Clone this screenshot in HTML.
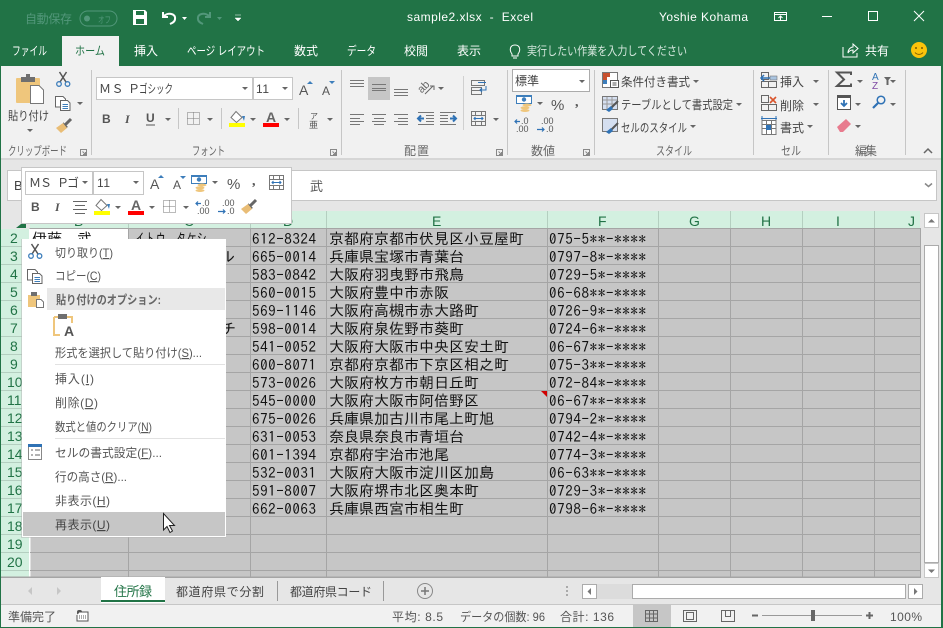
<!DOCTYPE html>
<html lang="ja"><head><meta charset="utf-8"><title>sample2.xlsx - Excel</title>
<style>
html,body{margin:0;padding:0;width:943px;height:628px;overflow:hidden;background:#e6e6e6}
svg{display:block;position:absolute;left:0;top:0}
text{font-family:"Liberation Sans","Noto Sans CJK JP",sans-serif;font-size:12px;fill:#444;white-space:pre}
.w text,text.w{fill:#fff}
.g text{fill:#666}
.c text{font-family:"IPAGothic","Liberation Sans",sans-serif;font-size:15px;fill:#111}
.h text{font-family:"Liberation Sans",sans-serif;font-size:14px;fill:#217346}
.m text{fill:#555}
tspan.u{text-decoration:underline}
</style></head><body>
<svg width="943" height="628" viewBox="0 0 943 628" xmlns="http://www.w3.org/2000/svg">
<defs>
<path id="ar" d="M0 0H6L3 3Z" fill="#666"/>
<g id="sc" fill="none"><path d="M4 10L10.500 0M10 10L3.500 0" stroke="#555" stroke-width="1.500"/><circle cx="3" cy="12" r="2.300" stroke="#3d7ebb" stroke-width="1.300"/><circle cx="11.500" cy="12" r="2.300" stroke="#3d7ebb" stroke-width="1.300"/></g>
<g id="br"><path d="M16 0L10 6" stroke="#666" stroke-width="3"/><path d="M8 3L13 8L11 9L9 8Z" fill="#666"/><path d="M1 9L8 4L12 9L6 14Z" fill="#e9bd76"/></g>
<g id="cp" fill="#fff" stroke="#666"><path d="M.5.5H8L10.500 3V11H.5Z"/><path d="M5.500 4.500H12.500L15 7V14.500H5.500Z"/><path d="M7.500 8.500H13M7.500 10.500H13M7.500 12.500H13" stroke="#3d7ebb"/></g>
<g id="fl"><path d="M7 0.500L13 6.500L7.500 11.500L2 6.500Z" fill="#fff" stroke="#777"/><path d="M13 5H16L15 10Z" fill="#3d7ebb"/></g>
<g id="bd" fill="none" stroke="#777" stroke-dasharray="1 1"><rect x=".5" y=".5" width="12" height="12"/><path d="M.5 6.500H12.500M6.500 .5V12.500"/></g>
<g id="ac"><rect x=".5" y=".5" width="15" height="8" fill="#fff" stroke="#3d7ebb"/><rect x="0" y="0" width="16" height="2" fill="#3d7ebb"/><circle cx="8" cy="4.500" r="2.200" fill="#3d7ebb"/><ellipse cx="11" cy="10" rx="4.500" ry="1.500" fill="#efc67c"/><ellipse cx="9" cy="12.800" rx="4.500" ry="1.500" fill="#efc67c"/><ellipse cx="9" cy="15.500" rx="4.500" ry="1.500" fill="#efc67c"/></g>
<g id="dl"><text x="6" y="6" style="font-size:9px;fill:#555">.0</text><text x="1" y="14" style="font-size:9px;fill:#555">.00</text><path d="M5 3.500H0M2 1.500L0 3.500L2 5.500" fill="none" stroke="#2f72b5" stroke-width="1.200"/></g>
<g id="dr"><text x="4" y="6" style="font-size:9px;fill:#555">.00</text><text x="9" y="14" style="font-size:9px;fill:#555">.0</text><path d="M0 11.500H7M5 9.500L7 11.500L5 13.500" fill="none" stroke="#2f72b5" stroke-width="1.200"/></g>
<g id="mg" fill="none" stroke="#777"><rect x=".5" y=".5" width="14" height="14"/><path d="M.5 4.500H14.500M.5 10.500H14.500M4.500 .5V4.500M10.500 .5V4.500M4.500 10.500V14.500M10.500 10.500V14.500"/><path d="M3 7.500H12M4.500 6L3 7.500L4.500 9M10.500 6L12 7.500L10.500 9" stroke="#2f72b5"/></g>
<path id="lc" d="M.5.5H6.500V6.500H.5Z M2.500 2.500L5.500 5.500M5.500 3V5.500H3" fill="none" stroke="#888"/>
<g id="tb" fill="#fff" stroke="#777"><rect x=".5" y=".5" width="14" height="14"/><path d="M.5 4.500H14.500M.5 8.500H14.500M5 .5V14.500M10 .5V14.500" fill="none"/></g>
</defs>

<!-- base -->
<rect width="943" height="628" fill="#e6e6e6"/>
<rect width="943" height="66" fill="#217346"/>

<!-- title bar -->
<text x="25" y="23" textLength="47" style="fill:#52977a;font-size:12px">自動保存</text>
<rect x="80" y="11" width="37" height="15" rx="7.500" fill="none" stroke="#52977a"/>
<circle cx="87" cy="18.500" r="3" fill="#52977a"/>
<text x="98" y="23" textLength="13" lengthAdjust="spacingAndGlyphs" style="fill:#52977a;font-size:9px">オフ</text>
<path d="M133 10H145L147 12V25H133Z" fill="#fff"/><rect x="136" y="11" width="8" height="4" fill="#217346"/><rect x="136" y="19" width="8" height="5" fill="#217346"/>
<path d="M163 12V17H168M163 17C167 12 176 13 175 19C175 22 172 23 170 24" fill="none" stroke="#fff" stroke-width="2"/>
<path d="M182 17H187L184.500 20Z" fill="#fff"/>
<path d="M210 12V17H205M210 17C206 12 197 13 198 19C198 22 201 23 203 24" fill="none" stroke="#52977a" stroke-width="2"/>
<path d="M217 17H222L219.500 20Z" fill="#52977a"/>
<path d="M235 15H241M235 18H241L238 21Z" fill="#fff" stroke="#fff" stroke-width=".5"/>
<g class="w">
<text x="407" y="21" textLength="126">sample2.xlsx  -  Excel</text>
<text x="659" y="21" textLength="89">Yoshie Kohama</text>
</g>
<g fill="none" stroke="#fff"><rect x="774.500" y="12.500" width="12" height="8"/><path d="M774 14.500H787M780.500 20V16M778.500 18L780.500 16L782.500 18"/>
<path d="M822 16.500H832"/><rect x="868.500" y="11.500" width="9" height="9"/><path d="M914 11L924 21M924 11L914 21"/></g>

<!-- tabs -->
<rect x="62" y="36" width="57" height="30" fill="#f1f1f1"/>
<g class="w">
<text x="12" y="55" textLength="35" lengthAdjust="spacingAndGlyphs">ファイル</text>
<text x="134" y="55" textLength="24">挿入</text>
<text x="187" y="55" textLength="78" lengthAdjust="spacingAndGlyphs">ページ レイアウト</text>
<text x="294" y="55" textLength="24">数式</text>
<text x="347" y="55" textLength="29" lengthAdjust="spacingAndGlyphs">データ</text>
<text x="404" y="55" textLength="24">校閲</text>
<text x="457" y="55" textLength="24">表示</text>
<text x="527" y="55" textLength="160" lengthAdjust="spacingAndGlyphs" style="fill:#d7e8df">実行したい作業を入力してください</text>
<text x="865" y="55" textLength="24">共有</text>
</g>
<text x="75" y="55" textLength="30" lengthAdjust="spacingAndGlyphs" style="fill:#217346">ホーム</text>
<path d="M512 54C509 50 510 45 515 45C520 45 521 50 518 54V56H512ZM513 58H517" fill="none" stroke="#fff"/>
<path d="M843 47V57H857V53M848 53C848 49 851 47 853 47V44L858 48.500L853 53V50C851 50 849 51 848 53Z" fill="none" stroke="#fff"/>
<circle cx="919" cy="50" r="8" fill="#fcc30b"/><circle cx="916" cy="48" r="1" fill="#7a5a00"/><circle cx="922" cy="48" r="1" fill="#7a5a00"/><path d="M915 52.500C917 55 921 55 923 52.500" fill="none" stroke="#7a5a00"/>

<!-- ribbon -->
<rect x="1" y="66" width="941" height="92" fill="#f1f1f1"/>
<rect x="1" y="158" width="941" height="2" fill="#d6d6d6"/>
<path d="M91.500 70V155M341.500 70V155M507.500 70V155M594.500 70V155M753.500 70V155M828.500 70V155M905.500 70V155" stroke="#c6c6c6"/>

<!-- clipboard -->
<rect x="16" y="78" width="24" height="25" rx="1" fill="#efc67c"/><rect x="21" y="77" width="14" height="5" fill="#6f6f6f"/><rect x="26" y="74" width="4" height="4" fill="#6f6f6f"/>
<path d="M30.500 85.500H39L43.500 90V103.500H30.500Z" fill="#fff" stroke="#777"/>
<text x="8" y="120" textLength="41" lengthAdjust="spacingAndGlyphs">貼り付け</text>
<use href="#ar" x="27" y="129"/>
<use href="#sc" x="56" y="72"/>
<use href="#cp" x="55" y="96"/>
<use href="#ar" x="77" y="102"/>
<use href="#br" x="55" y="119"/>
<g class="g"><text x="8" y="155" textLength="59" lengthAdjust="spacingAndGlyphs">クリップボード</text></g>
<use href="#lc" x="80" y="149"/>

<!-- font -->
<rect x="96.500" y="77.500" width="156" height="22" fill="#fff" stroke="#c6c6c6"/>
<rect x="253.500" y="77.500" width="39" height="22" fill="#fff" stroke="#c6c6c6"/>
<text x="99 111.500 128 128" y="93">ＭＳ Ｐ</text>
<text x="139" y="93" textLength="34" lengthAdjust="spacingAndGlyphs">ゴシック</text>
<text x="256" y="93" textLength="13">11</text>
<use href="#ar" x="242" y="87"/><use href="#ar" x="282" y="87"/>
<text x="299" y="95" style="font-size:14px;fill:#555">A</text><path d="M307 84L310 81L313 84Z" fill="#3d7ebb"/>
<text x="322" y="95" style="font-size:12px;fill:#555">A</text><path d="M329 81H335L332 84Z" fill="#3d7ebb"/>
<text x="102" y="123" style="font-size:12px;font-weight:bold;fill:#555">B</text>
<text x="125" y="123" style="font-size:12px;font-style:italic;font-family:'Liberation Serif';font-weight:bold;fill:#555">I</text>
<text x="146" y="122" style="font-size:12px;font-weight:bold;fill:#555">U</text><path d="M146 125H155" stroke="#555"/>
<use href="#ar" x="165" y="118"/>
<path d="M178.500 108V129M221.500 108V129M298.500 108V129" stroke="#c6c6c6"/>
<use href="#bd" x="187" y="112"/><use href="#ar" x="207" y="118"/>
<use href="#fl" x="229" y="111"/><rect x="229" y="123" width="16" height="4" fill="#ff0"/><use href="#ar" x="250" y="118"/>
<text x="266" y="122" style="font-size:14px;font-weight:bold;fill:#666">A</text><rect x="263" y="123" width="16" height="4" fill="#f00"/><use href="#ar" x="284" y="118"/>
<text x="310" y="119" style="font-size:8px;fill:#555">ア</text><text x="309" y="128" style="font-size:9px;fill:#555">亜</text><use href="#ar" x="327" y="118"/>
<g class="g"><text x="192" y="155" textLength="33" lengthAdjust="spacingAndGlyphs">フォント</text></g>
<use href="#lc" x="330" y="149"/>

<!-- alignment -->
<rect x="368" y="77" width="22" height="23" fill="#c6c6c6"/>
<path d="M350 80.500H364M350 83.500H364M350 86.500H364M372 84.500H386M372 88.500H386M372 90.500H386M394 89.500H408M394 92.500H408M394 95.500H408" stroke="#777"/>
<path d="M350 114.500H364M350 118.500H360M350 121.500H364M350 124.500H360M372 114.500H386M374 118.500H384M372 121.500H386M374 124.500H384M394 114.500H408M398 118.500H408M394 121.500H408M398 124.500H408" stroke="#777"/>
<path d="M418 112.500H434M426 115.500H434M426 118.500H434M426 121.500H434M418 124.500H434M440 112.500H456M440 115.500H448M440 118.500H448M440 121.500H448M440 124.500H456" stroke="#777"/>
<path d="M424 118.500H418M421 115.500L418 118.500L421 121.500" fill="none" stroke="#2f72b5" stroke-width="2"/><path d="M450 118.500H456M453 115.500L456 118.500L453 121.500" fill="none" stroke="#2f72b5" stroke-width="2"/>
<path d="M425 94L433 86M430 86H434V90" fill="none" stroke="#666"/><text x="418" y="91" style="font-size:11px;fill:#666" transform="rotate(-45 423 88)">ab</text>
<use href="#ar" x="438" y="87"/>
<path d="M463.500 76V130" stroke="#d0d0d0"/>
<g fill="none" stroke="#777"><rect x="471.500" y="80.500" width="13" height="5"/><rect x="471.500" y="87.500" width="10" height="7"/><path d="M471.500 90.500H481"/></g><path d="M478 82.500H486M486 86V90H480M482 88L480 90L482 92" fill="none" stroke="#2f72b5"/>
<use href="#mg" x="471" y="111"/><use href="#ar" x="493" y="118"/>
<g class="g"><text x="404" y="155" textLength="25">配置</text></g>
<use href="#lc" x="496" y="149"/>

<!-- number -->
<rect x="512.500" y="69.500" width="77" height="22" fill="#fff" stroke="#ababab"/>
<text x="515" y="85" textLength="24">標準</text>
<use href="#ar" x="579" y="80"/>
<use href="#ac" x="516" y="95"/><use href="#ar" x="537" y="102"/>
<text x="551" y="110" style="font-size:15px;fill:#555">%</text>
<text x="575" y="106" style="font-size:14px;font-weight:bold;font-family:'Liberation Serif';fill:#555">,</text>
<use href="#dl" x="515" y="118"/><use href="#dr" x="537" y="118"/>
<g class="g"><text x="531" y="155" textLength="24">数値</text></g>
<use href="#lc" x="583" y="149"/>

<!-- styles -->
<rect x="602.500" y="72.500" width="15" height="15" fill="#fff" stroke="#777"/><path d="M603 73H610V77H603ZM603 77H607V80H603Z" fill="#c8502e"/><path d="M603 80H607V84H603Z" fill="#3d7ebb"/><rect x="610.500" y="80.500" width="8" height="7" fill="#fff" stroke="#555"/><path d="M612.500 83H616.500M612.500 85H616.500" stroke="#555"/>
<rect x="602.500" y="96.500" width="15" height="13" fill="#d5dff0" stroke="#777"/><path d="M603 100H617M603 104H617M607 97V110M612 97V110" stroke="#999"/><path d="M611 108L618 101" stroke="#555" stroke-width="2"/><path d="M606 110L611 106L613 109L609 112Z" fill="#2f72b5"/>
<rect x="602.500" y="118.500" width="15" height="13" fill="#d5dff0" stroke="#777"/><path d="M611 130L618 123" stroke="#555" stroke-width="2"/><path d="M606 132L611 128L613 131L609 134Z" fill="#2f72b5"/>
<text x="621" y="86" textLength="69" lengthAdjust="spacingAndGlyphs">条件付き書式</text><use href="#ar" x="693" y="80"/>
<text x="621" y="109" textLength="112" lengthAdjust="spacingAndGlyphs">テーブルとして書式設定</text><use href="#ar" x="736" y="103"/>
<text x="621" y="132" textLength="66" lengthAdjust="spacingAndGlyphs">セルのスタイル</text><use href="#ar" x="690" y="125"/>
<g class="g"><text x="656" y="155" textLength="36" lengthAdjust="spacingAndGlyphs">スタイル</text></g>

<!-- cells -->
<g fill="none" stroke="#666"><path d="M761.500 72.500H768.500V79.500H761.500ZM761.500 81.500H776.500V87.500H761.500ZM768.500 81.500V87.500"/></g>
<rect x="770" y="76" width="7" height="4" fill="#a9c4e0" stroke="#777" stroke-width=".6"/><path d="M770 78H761M764 75L761 78L764 81" fill="none" stroke="#2f72b5" stroke-width="1.500"/>
<text x="780" y="86" textLength="24">挿入</text><use href="#ar" x="813" y="80"/>
<g fill="none" stroke="#666"><path d="M761.500 95.500H768.500V102.500H761.500ZM761.500 104.500H776.500V110.500H761.500ZM768.500 104.500V110.500"/></g>
<path d="M770 97L776 103M776 97L770 103" stroke="#d9552c" stroke-width="1.600"/>
<text x="780" y="110" textLength="24">削除</text><use href="#ar" x="813" y="103"/>
<path d="M761 118.500H777M762 116V121M776 116V121" stroke="#2f72b5"/><use href="#tb" x="761.500" y="120"/><rect x="766" y="125" width="5" height="5" fill="#2f72b5"/>
<text x="780" y="132" textLength="24">書式</text><use href="#ar" x="807" y="125"/>
<g class="g"><text x="781" y="155" textLength="20" lengthAdjust="spacingAndGlyphs">セル</text></g>

<!-- edit -->
<path d="M851 75V72.500H837L844 79.500L837 86H851V83.500" fill="none" stroke="#555" stroke-width="2"/><use href="#ar" x="857" y="80"/>
<text x="872" y="80" style="font-size:10px;fill:#2f72b5">A</text><text x="872" y="89" style="font-size:10px;fill:#7f4aa3">Z</text>
<path d="M884 77H891L888.500 80V85H886.500V80Z" fill="#666"/><use href="#ar" x="890" y="80"/>
<rect x="837.500" y="95.500" width="13" height="14" fill="#fff" stroke="#555"/><rect x="838" y="96" width="12" height="2" fill="#555"/><path d="M844 100V106M841 103L844 106L847 103" fill="none" stroke="#2f72b5" stroke-width="1.800"/><use href="#ar" x="855" y="103"/>
<circle cx="881" cy="100" r="3.800" fill="none" stroke="#2f72b5" stroke-width="1.500"/><path d="M878 103L873 108" stroke="#2f72b5" stroke-width="2.200"/><use href="#ar" x="890" y="103"/>
<path d="M837 127L846 119L851 124L843 132H840Z" fill="#e87b8e"/><use href="#ar" x="855" y="125"/>
<g class="g"><text x="855" y="155" textLength="22">編集</text></g>
<path d="M924 153L928 149L932 153" fill="none" stroke="#666" stroke-width="1.500"/>

<!-- formula bar -->
<rect x="7.500" y="170.500" width="929" height="30" fill="#fff" stroke="#c6c6c6"/>
<text x="14" y="190" style="font-size:13px">B</text>
<text x="310" y="191" style="font-size:13px;fill:#555">武</text>
<path d="M925 183.500L928.500 186.500L932 183.500" fill="none" stroke="#888" stroke-width="1.500"/>

<!-- headers -->
<rect x="1" y="211" width="29" height="18" fill="#e6e6e6"/>
<path d="M16 228L26 228L26 220Z" fill="#217346"/>
<rect x="30" y="211" width="890" height="18" fill="#d3f0e0"/>
<path d="M128.500 211V228M250.500 211V228M326.500 211V228M547.500 211V228M658.500 211V228M730.500 211V228M802.500 211V228M874.500 211V228" stroke="#b4cfc0"/>
<rect x="1" y="229" width="29" height="348" fill="#d3f0e0"/>
<path d="M1 246.500H29M1 264.500H29M1 282.500H29M1 300.500H29M1 318.500H29M1 336.500H29M1 354.500H29M1 372.500H29M1 390.500H29M1 408.500H29M1 426.500H29M1 444.500H29M1 462.500H29M1 480.500H29M1 498.500H29M1 516.500H29M1 534.500H29M1 552.500H29M1 570.500H29" stroke="#b4cfc0"/>
<g class="h">
<text x="74" y="226">B</text><text x="184" y="226">C</text><text x="283" y="226">D</text><text x="432" y="226">E</text><text x="598" y="226">F</text><text x="689" y="226">G</text><text x="761" y="226">H</text><text x="836" y="226">I</text><text x="908" y="226">J</text>
<text x="10" y="243">2</text><text x="10" y="261">3</text><text x="10" y="279">4</text><text x="10" y="297">5</text><text x="10" y="315">6</text><text x="10" y="333">7</text><text x="10" y="351">8</text><text x="10" y="369">9</text>
<text x="7" y="387">10</text><text x="7" y="405">11</text><text x="7" y="423">12</text><text x="7" y="441">13</text><text x="7" y="459">14</text><text x="7" y="477">15</text><text x="7" y="495">16</text><text x="7" y="513">17</text><text x="7" y="531">18</text><text x="7" y="549">19</text><text x="7" y="567">20</text>
</g>

<!-- grid -->
<rect x="29" y="228" width="892" height="349" fill="#c6c6c6"/>
<rect x="29" y="229" width="100" height="18" fill="#fff"/>
<rect x="29" y="229" width="1.500" height="348" fill="#fff"/>
<path d="M30 228.500H921M128 246.500H921M30 264.500H921M30 282.500H921M30 300.500H921M30 318.500H921M30 336.500H921M30 354.500H921M30 372.500H921M30 390.500H921M30 408.500H921M30 426.500H921M30 444.500H921M30 462.500H921M30 480.500H921M30 498.500H921M30 516.500H921M30 534.500H921M30 552.500H921M30 570.500H921M128.500 229V577M250.500 229V577M326.500 229V577M547.500 229V577M658.500 229V577M730.500 229V577M802.500 229V577M874.500 229V577M920.500 229V577M1 577H921" stroke="#a5a5a5" fill="none"/>
<path d="M541 391H547V397Z" fill="#d00000"/>

<g class="c">
<text x="32" y="244">伊藤　武</text>
<text x="135" y="244" textLength="72" lengthAdjust="spacingAndGlyphs">イトウ　タケシ</text>
<text x="220" y="262">ル</text>
<text x="221" y="334">チ</text>
<text x="252" y="244" textLength="64">612-8324</text>
<text x="252" y="262" textLength="64">665-0014</text>
<text x="252" y="280" textLength="64">583-0842</text>
<text x="252" y="298" textLength="64">560-0015</text>
<text x="252" y="316" textLength="64">569-1146</text>
<text x="252" y="334" textLength="64">598-0014</text>
<text x="252" y="352" textLength="64">541-0052</text>
<text x="252" y="370" textLength="64">600-8071</text>
<text x="252" y="388" textLength="64">573-0026</text>
<text x="252" y="406" textLength="64">545-0000</text>
<text x="252" y="424" textLength="64">675-0026</text>
<text x="252" y="442" textLength="64">631-0053</text>
<text x="252" y="460" textLength="64">601-1394</text>
<text x="252" y="478" textLength="64">532-0031</text>
<text x="252" y="496" textLength="64">591-8007</text>
<text x="252" y="514" textLength="64">662-0063</text>
<text x="329" y="244">京都府京都市伏見区小豆屋町</text>
<text x="329" y="262">兵庫県宝塚市青葉台</text>
<text x="329" y="280">大阪府羽曳野市飛鳥</text>
<text x="329" y="298">大阪府豊中市赤阪</text>
<text x="329" y="316">大阪府高槻市赤大路町</text>
<text x="329" y="334">大阪府泉佐野市葵町</text>
<text x="329" y="352">大阪府大阪市中央区安土町</text>
<text x="329" y="370">京都府京都市下京区相之町</text>
<text x="329" y="388">大阪府枚方市朝日丘町</text>
<text x="329" y="406">大阪府大阪市阿倍野区</text>
<text x="329" y="424">兵庫県加古川市尾上町旭</text>
<text x="329" y="442">奈良県奈良市青垣台</text>
<text x="329" y="460">京都府宇治市池尾</text>
<text x="329" y="478">大阪府大阪市淀川区加島</text>
<text x="329" y="496">大阪府堺市北区奥本町</text>
<text x="329" y="514">兵庫県西宮市相生町</text>
<text x="549" y="244" textLength="97">075-5**-****</text>
<text x="549" y="262" textLength="97">0797-8*-****</text>
<text x="549" y="280" textLength="97">0729-5*-****</text>
<text x="549" y="298" textLength="97">06-68**-****</text>
<text x="549" y="316" textLength="97">0726-9*-****</text>
<text x="549" y="334" textLength="97">0724-6*-****</text>
<text x="549" y="352" textLength="97">06-67**-****</text>
<text x="549" y="370" textLength="97">075-3**-****</text>
<text x="549" y="388" textLength="97">072-84*-****</text>
<text x="549" y="406" textLength="97">06-67**-****</text>
<text x="549" y="424" textLength="97">0794-2*-****</text>
<text x="549" y="442" textLength="97">0742-4*-****</text>
<text x="549" y="460" textLength="97">0774-3*-****</text>
<text x="549" y="478" textLength="97">06-63**-****</text>
<text x="549" y="496" textLength="97">0729-3*-****</text>
<text x="549" y="514" textLength="97">0798-6*-****</text>
</g>

<!-- v scrollbar -->
<rect x="921" y="211" width="20" height="366" fill="#e6e6e6"/>
<rect x="924.500" y="213.500" width="14" height="14" fill="#fff" stroke="#c6c6c6"/><path d="M928 222.500H935L931.500 219Z" fill="#777"/>
<rect x="924.500" y="245.500" width="14" height="317" fill="#fff" stroke="#ababab"/>
<rect x="924.500" y="563.500" width="14" height="14" fill="#fff" stroke="#c6c6c6"/><path d="M928 569.500H935L931.500 573Z" fill="#777"/>

<!-- sheet tabs -->
<rect x="1" y="578" width="940" height="27" fill="#e6e6e6"/>
<rect x="0" y="577" width="921" height="1" fill="#a5a5a5"/>
<path d="M32 587V595L28 591ZM57 587V595L61 591Z" fill="#c6c6c6"/>
<rect x="101" y="577" width="64" height="26" fill="#fff"/><rect x="101" y="600" width="64" height="2" fill="#217346"/>
<text x="114" y="596" textLength="38" style="font-size:13px;fill:#217346">住所録</text>
<text x="176" y="596" textLength="88">都道府県で分割</text>
<text x="290" y="596" textLength="82">都道府県コード</text>
<path d="M277.500 581V601M383.500 581V601" stroke="#999"/>
<circle cx="425" cy="591" r="7.500" fill="none" stroke="#888"/><path d="M421 591H429M425 587V595" stroke="#777" stroke-width="1.500"/>
<path d="M566 586h2v2h-2zM566 590h2v2h-2zM566 594h2v2h-2z" fill="#aaa"/>
<rect x="582.500" y="584.500" width="14" height="14" fill="#fff" stroke="#ababab"/><path d="M591 588V595L587.500 591.500Z" fill="#777"/>
<rect x="597" y="584" width="35" height="15" fill="#dcdcdc"/>
<rect x="632.500" y="584.500" width="273" height="14" fill="#fff" stroke="#ababab"/>
<rect x="908.500" y="584.500" width="14" height="14" fill="#fff" stroke="#ababab"/><path d="M914 588V595L917.500 591.500Z" fill="#777"/>

<!-- status bar -->
<rect x="1" y="604" width="941" height="1" fill="#c6c6c6"/>
<rect x="1" y="605" width="941" height="22" fill="#f1f1f1"/>
<rect x="633" y="605" width="38" height="22" fill="#c6c6c6"/>
<g class="m">
<text x="8" y="621" textLength="48">準備完了</text>
<text x="392" y="621" textLength="51">平均: 8.5</text>
<text x="460" y="621" textLength="85" lengthAdjust="spacingAndGlyphs">データの個数: 96</text>
<text x="560" y="621" textLength="54">合計: 136</text>
<text x="890" y="621" textLength="32">100%</text>
</g>
<rect x="77" y="610" width="5" height="5" rx="2" fill="#555"/><path d="M80 612H88V621H77V615" fill="#fff" stroke="#555"/><path d="M79 616H87M79 618H87" stroke="#555" stroke-dasharray="1 1"/>
<g fill="none" stroke="#666"><rect x="645.500" y="610.500" width="12" height="11"/><path d="M645 614H658M645 618H658M649.500 610V622M653.500 610V622"/>
<rect x="683.500" y="610.500" width="13" height="11"/><rect x="686.500" y="612.500" width="7" height="7"/>
<path d="M721.500 621.500V610.500H734.500V621.500ZM725.500 610.500V616.500H730.500V610.500"/></g>
<path d="M752 615.500H758" stroke="#666" stroke-width="2"/>
<path d="M762 615.500H862" stroke="#999"/><rect x="811" y="610" width="4" height="11" fill="#666"/>
<path d="M866 615.500H873M869.500 612V619" stroke="#666" stroke-width="2"/>

<!-- mini toolbar -->
<rect x="21.500" y="167.500" width="270" height="56" fill="#fff" stroke="#c6c6c6"/>
<rect x="25.500" y="171.500" width="67" height="23" fill="#fff" stroke="#c6c6c6"/>
<rect x="93.500" y="171.500" width="50" height="23" fill="#fff" stroke="#c6c6c6"/>
<text x="29 40 57 57 67" y="187">ＭＳ Ｐゴ</text>
<text x="97" y="187" textLength="13">11</text>
<use href="#ar" x="82" y="181"/><use href="#ar" x="133" y="181"/>
<text x="150" y="189" style="font-size:14px;fill:#555">A</text><path d="M158 178L161 175L164 178Z" fill="#3d7ebb"/>
<text x="173" y="189" style="font-size:12px;fill:#555">A</text><path d="M180 176H186L183 179Z" fill="#3d7ebb"/>
<use href="#ac" x="191" y="175"/><use href="#ar" x="212" y="181"/>
<text x="227" y="189" style="font-size:15px;fill:#555">%</text>
<text x="252" y="185" style="font-size:14px;font-weight:bold;font-family:'Liberation Serif';fill:#555">,</text>
<use href="#mg" x="269" y="175"/>
<text x="31" y="211" style="font-size:12px;font-weight:bold;fill:#555">B</text>
<text x="55" y="211" style="font-size:12px;font-style:italic;font-family:'Liberation Serif';font-weight:bold;fill:#555">I</text>
<path d="M73 201.500H87M75 205.500H85M73 209.500H87M75 213.500H85" stroke="#666"/>
<use href="#fl" x="94" y="199"/><rect x="94" y="211" width="16" height="4" fill="#ff0"/><use href="#ar" x="115" y="206"/>
<text x="131" y="210" style="font-size:14px;font-weight:bold;fill:#666">A</text><rect x="128" y="211" width="16" height="4" fill="#f00"/><use href="#ar" x="149" y="206"/>
<use href="#bd" x="163" y="200"/><use href="#ar" x="183" y="206"/>
<use href="#dl" x="196" y="200"/><use href="#dr" x="218" y="200"/>
<use href="#br" x="240" y="200"/>

<!-- context menu -->
<rect x="22.500" y="239.500" width="203" height="297" fill="#fff" stroke="#fff"/>
<path d="M21.500 239V537.500H226" fill="none" stroke="#b5b5b5" stroke-opacity=".5"/>
<rect x="47" y="288" width="178" height="22" fill="#e8e8e8"/>
<rect x="23" y="512" width="202" height="24" fill="#c6c6c6"/>
<path d="M55 364.500H225M55 438.500H225" stroke="#e2e2e2"/>
<use href="#sc" x="28" y="244"/>
<use href="#cp" x="27" y="269"/>
<rect x="28" y="295" width="12" height="12" fill="#efc67c"/><rect x="31" y="292" width="6" height="4" fill="#6f6f6f"/><path d="M36.500 299.500H41L43.500 302V307.500H36.500Z" fill="#fff" stroke="#777"/>
<path d="M54 317H72V323M60 335H54V317" fill="none" stroke="#efc67c" stroke-width="2"/><rect x="58" y="314" width="9" height="5" fill="#6f6f6f"/>
<text x="64" y="336" style="font-size:14px;font-weight:bold;fill:#555">A</text>
<rect x="28.500" y="444.500" width="13" height="15" fill="#fff" stroke="#888"/><rect x="28" y="444" width="14" height="3" fill="#2f72b5"/><path d="M31 450H33M35 450H40M31 455H33M35 455H40" stroke="#666"/>
<g class="m">
<text x="55" y="257" textLength="58" lengthAdjust="spacingAndGlyphs">切り取り(<tspan class="u">T</tspan>)</text>
<text x="55" y="280" textLength="46" lengthAdjust="spacingAndGlyphs">コピー(<tspan class="u">C</tspan>)</text>
<text x="56" y="304" textLength="105" lengthAdjust="spacingAndGlyphs" style="font-weight:bold;fill:#666">貼り付けのオプション:</text>
<text x="55" y="357" textLength="147" lengthAdjust="spacingAndGlyphs">形式を選択して貼り付け(<tspan class="u">S</tspan>)...</text>
<text x="55" y="383" textLength="39">挿入(<tspan class="u">I</tspan>)</text>
<text x="55" y="407" textLength="43">削除(<tspan class="u">D</tspan>)</text>
<text x="55" y="431" textLength="97" lengthAdjust="spacingAndGlyphs">数式と値のクリア(<tspan class="u">N</tspan>)</text>
<text x="55" y="457" textLength="107" lengthAdjust="spacingAndGlyphs">セルの書式設定(<tspan class="u">F</tspan>)...</text>
<text x="55" y="481" textLength="72" lengthAdjust="spacingAndGlyphs">行の高さ(<tspan class="u">R</tspan>)...</text>
<text x="55" y="505" textLength="55">非表示(<tspan class="u">H</tspan>)</text>
<text x="55" y="529" textLength="55" style="fill:#444">再表示(<tspan class="u">U</tspan>)</text>
</g>
<path d="M163.500 513.500V530L167 526.500L170 532.500L172.500 531L169.500 525.500H174.500Z" fill="#fff" stroke="#222"/>

<!-- window border -->
<rect x="0" y="0" width="1" height="628" fill="#217346"/>
<rect x="941" y="0" width="2" height="628" fill="#217346"/>
<rect x="0" y="627" width="943" height="1" fill="#217346"/>
</svg>
</body></html>
